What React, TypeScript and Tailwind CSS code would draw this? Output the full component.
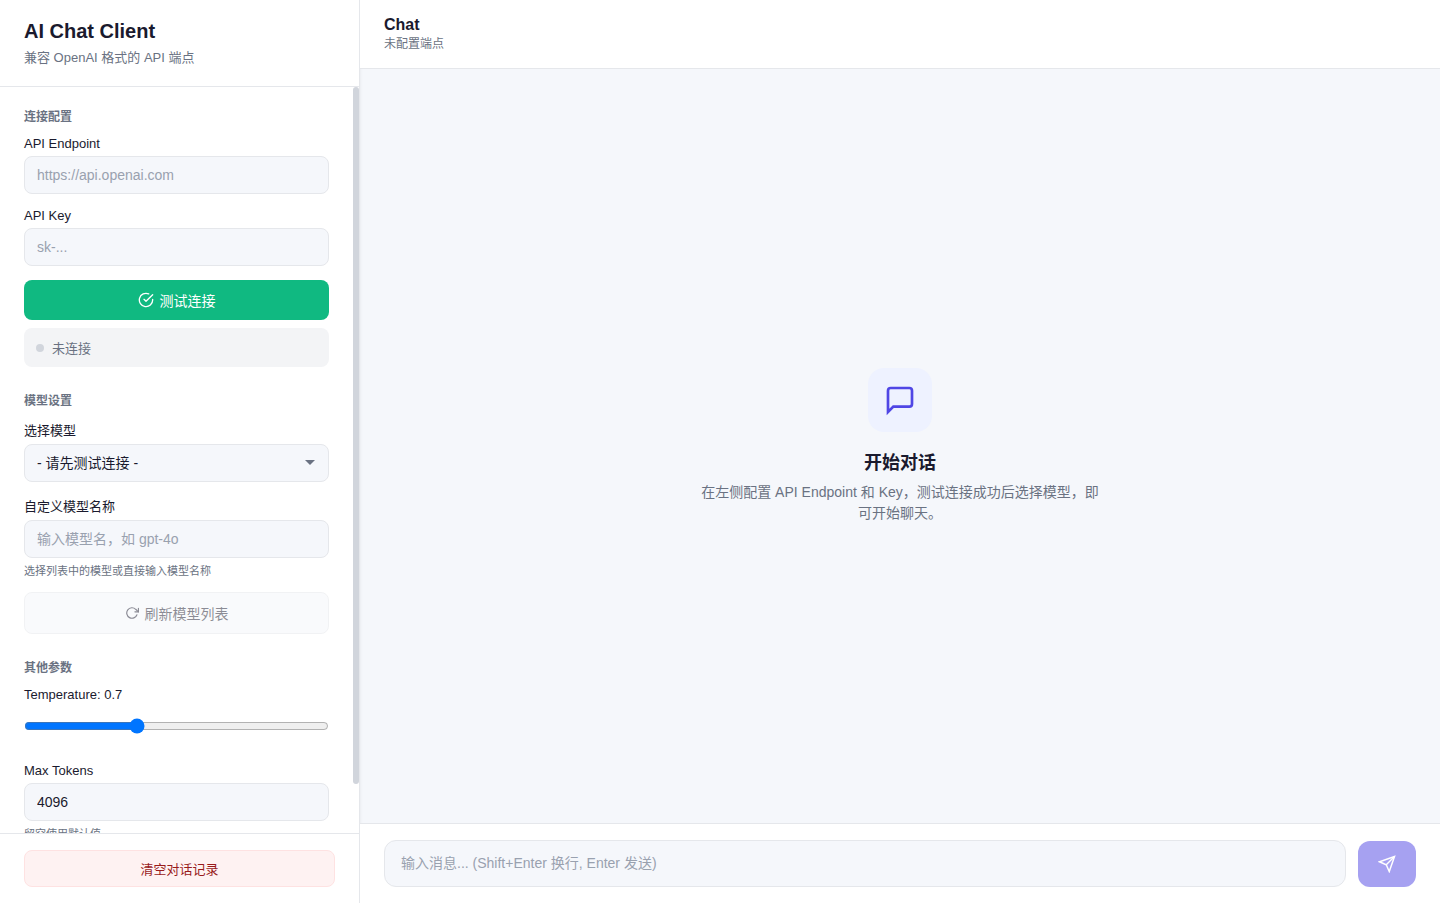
import { useEffect, useRef, useState } from "react";
import type { ReactNode } from "react";
import { FiCheckCircle, FiRotateCw } from "react-icons/fi";

const inputClass =
  "block h-[38px] w-full rounded-lg border border-gray-200 bg-[#f5f7fb] px-3 text-sm text-[#1a1a2e] outline-none placeholder:text-gray-400 focus:border-indigo-600";

const Section = ({ title, children }: { title: string; children: ReactNode }) => (
  <section className="mb-6">
    <h3 className="mb-3 text-xs leading-[normal] font-semibold text-gray-500">{title}</h3>
    {children}
  </section>
);

type FieldProps = {
  id: string;
  label: string;
  hint?: string;
  children: ReactNode;
};

const Field = ({ id, label, hint, children }: FieldProps) => (
  <div className="mb-3.5">
    <label htmlFor={id} className="mb-[5px] block text-[13px] leading-[normal]">
      {label}
    </label>
    {children}
    {hint && <p className="mt-1 text-[11px] leading-[normal] text-gray-500">{hint}</p>}
  </div>
);

// Scrolling column with a slim rail on its right side
const ScrollPanel = ({ children }: { children: ReactNode }) => {
  const ref = useRef<HTMLDivElement>(null);
  const [thumb, setThumb] = useState({ height: 0, top: 0 });

  const measure = () => {
    const el = ref.current;
    if (!el) return;
    setThumb({
      height: (el.clientHeight / el.scrollHeight) * 100,
      top: (el.scrollTop / el.scrollHeight) * el.clientHeight,
    });
  };

  useEffect(() => {
    measure();
    window.addEventListener("resize", measure);
    return () => window.removeEventListener("resize", measure);
  }, []);

  return (
    <div className="flex min-h-0 flex-1">
      <div
        ref={ref}
        onScroll={measure}
        className="min-w-0 flex-1 overflow-y-auto px-6 py-5 [scrollbar-width:none]"
      >
        {children}
      </div>
      <div className="w-1.5 shrink-0">
        <div
          className="rounded-[3px] bg-gray-300"
          style={{ height: `${thumb.height}%`, transform: `translateY(${thumb.top}px)` }}
        />
      </div>
    </div>
  );
};

const Sidebar = () => {
  const [temperature, setTemperature] = useState(0.7);

  return (
    <aside className="flex h-full w-[360px] shrink-0 flex-col border-r border-gray-200 bg-white shadow-[0_1px_3px_rgba(0,0,0,0.08)]">
      {/* Header */}
      <div className="border-b border-gray-200 px-6 py-5">
        <h1 className="text-xl leading-[23px] font-bold">AI Chat Client</h1>
        <p className="mt-1 text-[13px] leading-[normal] text-gray-500">
          兼容 OpenAI 格式的 API 端点
        </p>
      </div>

      {/* Settings */}
      <ScrollPanel>
        <Section title="连接配置">
          <Field id="endpoint" label="API Endpoint">
            <input id="endpoint" type="text" placeholder="https://api.openai.com" className={inputClass} />
          </Field>
          <Field id="api-key" label="API Key">
            <input id="api-key" type="password" placeholder="sk-..." className={inputClass} />
          </Field>
          <button
            type="button"
            className="flex h-10 w-full items-center justify-center gap-1.5 rounded-lg bg-[#10b981] text-sm leading-[normal] text-white"
          >
            <FiCheckCircle size={16} />
            测试连接
          </button>
          <div className="mt-2 flex items-center gap-2 rounded-lg bg-gray-100 px-3 py-2.5 text-[13px] leading-[normal] text-gray-500">
            <span className="size-2 rounded-full bg-gray-300" />
            未连接
          </div>
        </Section>

        <Section title="模型设置">
          <Field id="model" label="选择模型">
            <div className="relative">
              <select id="model" className={`${inputClass} appearance-none pr-9`}>
                <option>- 请先测试连接 -</option>
              </select>
              <svg
                viewBox="0 0 10 5"
                className="pointer-events-none absolute top-4 right-3.5 h-[5px] w-2.5 fill-gray-500"
              >
                <path d="M0 0h10L5 5z" />
              </svg>
            </div>
          </Field>
          <Field id="custom-model" label="自定义模型名称" hint="选择列表中的模型或直接输入模型名称">
            <input id="custom-model" type="text" placeholder="输入模型名，如 gpt-4o" className={inputClass} />
          </Field>
          <button
            type="button"
            disabled
            className="flex h-[42px] w-full items-center justify-center gap-1.5 rounded-lg border border-gray-200 bg-[#f5f7fb] text-sm leading-[normal] opacity-50"
          >
            <FiRotateCw size={14} />
            刷新模型列表
          </button>
        </Section>

        <Section title="其他参数">
          <Field id="temperature" label={`Temperature: ${temperature}`}>
            <input
              id="temperature"
              type="range"
              min={0}
              max={2}
              step={0.1}
              value={temperature}
              onChange={(e) => setTemperature(Number(e.target.value))}
              className="mb-[18px] block h-[38px] w-full px-[13px]"
            />
          </Field>
          <Field id="max-tokens" label="Max Tokens" hint="留空使用默认值">
            <input id="max-tokens" type="text" inputMode="numeric" defaultValue="4096" className={inputClass} />
          </Field>
        </Section>
      </ScrollPanel>

      {/* Footer */}
      <div className="border-t border-gray-200 px-6 py-4">
        <button
          type="button"
          className="h-[37px] w-full rounded-lg border border-[#fee2e2] bg-[#fef2f2] text-[13px] leading-[normal] text-[#991b1b]"
        >
          清空对话记录
        </button>
      </div>
    </aside>
  );
};

const EmptyState = () => (
  <div className="flex min-h-0 flex-1 flex-col items-center justify-center text-center">
    <div className="flex size-16 items-center justify-center rounded-2xl bg-[#eef2ff] text-[#4f46e5]">
      <svg width="32" height="32" viewBox="0 0 24 24" fill="none" stroke="currentColor" strokeWidth="2">
        <path d="M21 15a2 2 0 0 1-2 2H7l-4 4V5a2 2 0 0 1 2-2h14a2 2 0 0 1 2 2z" />
      </svg>
    </div>
    <h3 className="mt-4 text-lg leading-[normal] font-semibold">开始对话</h3>
    <p className="mt-2 max-w-[400px] text-sm leading-[21px] text-gray-500">
      在左侧配置 API Endpoint 和 Key，测试连接成功后选择模型，即可开始聊天。
    </p>
  </div>
);

const App = () => {
  return (
    <div className="flex h-screen overflow-hidden bg-[#f5f7fb] font-['Liberation_Sans','Noto_Sans_CJK_SC',sans-serif] text-[#1a1a2e]">
      <Sidebar />

      <main className="flex min-w-0 flex-1 flex-col">
        <header className="border-b border-gray-200 bg-white px-6 pt-4 pb-[17px]">
          <h2 className="text-base leading-[18px] font-semibold">Chat</h2>
          <p className="text-xs leading-[normal] text-gray-500">未配置端点</p>
        </header>

        <EmptyState />

        <form
          className="flex items-end gap-3 border-t border-gray-200 bg-white px-6 py-4"
          onSubmit={(e) => e.preventDefault()}
        >
          <textarea
            rows={1}
            aria-label="输入消息"
            placeholder="输入消息... (Shift+Enter 换行, Enter 发送)"
            className="block h-[47px] min-w-0 flex-1 resize-none rounded-xl border border-gray-200 bg-[#f5f7fb] px-4 py-3 text-sm leading-[21px] outline-none placeholder:text-gray-400 focus:border-indigo-600"
          />
          <button
            type="submit"
            disabled
            aria-label="发送"
            className="flex h-[46px] w-[58px] items-center justify-center rounded-xl bg-[#4f46e5] text-white opacity-50"
          >
            <svg width="18" height="18" viewBox="0 0 24 24" fill="none" stroke="currentColor" strokeWidth="2">
              <path d="M22 2 11 13" />
              <path d="m22 2-7 20-4-9-9-4z" />
            </svg>
          </button>
        </form>
      </main>
    </div>
  );
};

export default App;
